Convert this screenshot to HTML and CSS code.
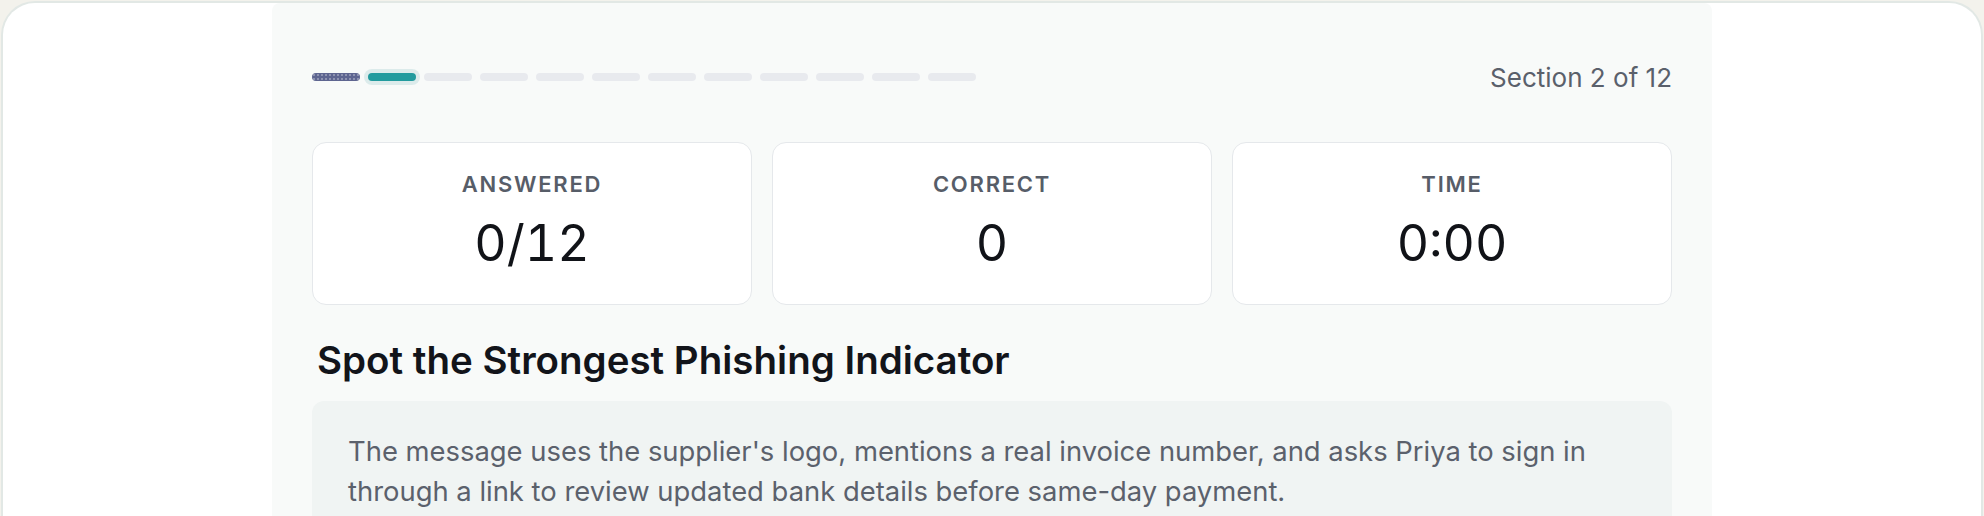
FILE: index.html
```html
<!DOCTYPE html>
<html lang="en">
<head>
    <meta charset="UTF-8">
    <meta name="viewport" content="width=device-width, initial-scale=1.0">
    <title>Phishing Awareness Drill</title>
    <link rel="stylesheet" href="styles.css">
</head>
<body>
    <div class="frame">
        <main class="panel">
            <!-- progress through the drill -->
            <div class="progress-row">
                <div class="steps">
                    <span class="step done"></span>
                    <span class="step current"></span>
                    <span class="step"></span>
                    <span class="step"></span>
                    <span class="step"></span>
                    <span class="step"></span>
                    <span class="step"></span>
                    <span class="step"></span>
                    <span class="step"></span>
                    <span class="step"></span>
                    <span class="step"></span>
                    <span class="step"></span>
                </div>
                <div class="section-count">Section 2 of 12</div>
            </div>

            <!-- score cards -->
            <div class="stats">
                <div class="stat">
                    <div class="stat-label">Answered</div>
                    <div class="stat-value">0/12</div>
                </div>
                <div class="stat">
                    <div class="stat-label">Correct</div>
                    <div class="stat-value">0</div>
                </div>
                <div class="stat">
                    <div class="stat-label">Time</div>
                    <div class="stat-value">0:00</div>
                </div>
            </div>

            <h2 class="question-title">Spot the Strongest Phishing Indicator</h2>
            <div class="scenario">
                <p>The message uses the supplier's logo, mentions a real invoice number, and asks Priya to sign in through a link to review updated bank details before same-day payment.</p>
            </div>
        </main>
    </div>
</body>
</html>
```

FILE: styles.css
```css
* {
    margin: 0;
    padding: 0;
    box-sizing: border-box;
}
body {
    background: #f3f2ec;
    font-family: Inter, "Noto Sans", sans-serif;
    overflow: hidden;
}
.frame {
    margin: 1px 1px 0;
    min-height: 515px;
    background: #fff;
    border: 2px solid #e2e8e5;
    border-bottom: none;
    border-radius: 34px 34px 0 0;
    display: flex;
    justify-content: center;
}
.panel {
    width: 1440px;
    background: #f8faf9;
    border-radius: 8px 8px 0 0;
    padding: 58px 40px 0;
}
/* step bar */
.progress-row {
    display: flex;
    justify-content: space-between;
    align-items: center;
    height: 32px;
}
.steps {
    display: flex;
    gap: 8px;
}
.step {
    width: 48px;
    height: 8px;
    border-radius: 4px;
    background: #e8eaee;
}
.step.done {
    background:
        radial-gradient(circle, rgba(255, 255, 255, 0.3) 0.7px, transparent 1.2px) 0 0 / 4px 4px,
        #5e6590;
}
.step.current {
    background: #229b9e;
    box-shadow: 0 0 0 4px #dcebeb;
}
.section-count {
    font-size: 26px;
    color: #5a606b;
}
/* score cards */
.stats {
    display: grid;
    grid-template-columns: repeat(3, 1fr);
    gap: 20px;
    margin-top: 49px;
}
.stat {
    background: #fff;
    border: 1.5px solid #e5e8eb;
    border-radius: 14px;
    padding: 28px 20px 31px;
    text-align: center;
}
.stat-label {
    font-size: 22px;
    line-height: 1.2;
    font-weight: 600;
    letter-spacing: 0.08em;
    text-transform: uppercase;
    color: #575d68;
}
.stat-value {
    margin-top: 16px;
    font-size: 50px;
    line-height: 1.2;
    font-variant-numeric: tabular-nums;
    color: #111318;
}
/* question */
.question-title {
    margin-top: 31px;
    padding-left: 5px;
    font-size: 38.5px;
    line-height: 48px;
    font-weight: 600;
    color: #12141a;
}
.scenario {
    margin-top: 17px;
    background: #f0f4f3;
    border-radius: 12px;
    padding: 30px 36px;
}
.scenario p {
    font-size: 27.4px;
    line-height: 40px;
    color: #5b616c;
}
```
